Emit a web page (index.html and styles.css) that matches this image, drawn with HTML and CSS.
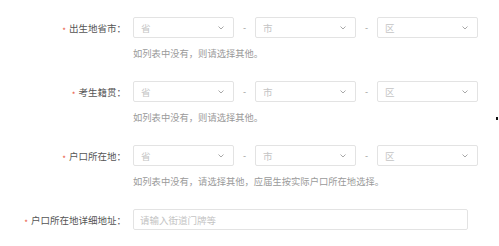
FILE: index.html
```html
<!DOCTYPE html>
<html lang="zh-CN">
<head>
    <meta charset="UTF-8">
    <meta name="viewport" content="width=device-width, initial-scale=1.0">
    <title>考生信息</title>
    <link rel="stylesheet" href="styles.css">
</head>
<body>
    <form class="info-form">
        <div class="field">
            <div class="row">
                <label class="label"><span class="star">*</span>出生地省市：</label>
                <div class="select"><span>省</span><svg viewBox="0 0 6 4"><polyline points="0.5,0.5 3,3 5.5,0.5"/></svg></div>
                <span class="dash">-</span>
                <div class="select"><span>市</span><svg viewBox="0 0 6 4"><polyline points="0.5,0.5 3,3 5.5,0.5"/></svg></div>
                <span class="dash">-</span>
                <div class="select"><span>区</span><svg viewBox="0 0 6 4"><polyline points="0.5,0.5 3,3 5.5,0.5"/></svg></div>
            </div>
            <p class="hint">如列表中没有，则请选择其他。</p>
        </div>

        <div class="field">
            <div class="row">
                <label class="label"><span class="star">*</span>考生籍贯：</label>
                <div class="select"><span>省</span><svg viewBox="0 0 6 4"><polyline points="0.5,0.5 3,3 5.5,0.5"/></svg></div>
                <span class="dash">-</span>
                <div class="select"><span>市</span><svg viewBox="0 0 6 4"><polyline points="0.5,0.5 3,3 5.5,0.5"/></svg></div>
                <span class="dash">-</span>
                <div class="select"><span>区</span><svg viewBox="0 0 6 4"><polyline points="0.5,0.5 3,3 5.5,0.5"/></svg></div>
            </div>
            <p class="hint">如列表中没有，则请选择其他。</p>
        </div>

        <div class="field">
            <div class="row">
                <label class="label"><span class="star">*</span>户口所在地：</label>
                <div class="select"><span>省</span><svg viewBox="0 0 6 4"><polyline points="0.5,0.5 3,3 5.5,0.5"/></svg></div>
                <span class="dash">-</span>
                <div class="select"><span>市</span><svg viewBox="0 0 6 4"><polyline points="0.5,0.5 3,3 5.5,0.5"/></svg></div>
                <span class="dash">-</span>
                <div class="select"><span>区</span><svg viewBox="0 0 6 4"><polyline points="0.5,0.5 3,3 5.5,0.5"/></svg></div>
            </div>
            <p class="hint">如列表中没有，请选择其他，应届生按实际户口所在地选择。</p>
        </div>

        <div class="field">
            <div class="row">
                <label class="label"><span class="star">*</span>户口所在地详细地址：</label>
                <input class="text-input" type="text" placeholder="请输入街道门牌等">
            </div>
        </div>
    </form>
    <div class="dot"></div>
</body>
</html>
```

FILE: styles.css
```css
body {
    margin: 0;
    padding-top: 17px;
    font-family: "Noto Sans CJK SC", "Noto Sans", sans-serif;
    background-color: #ffffff;
    color: #555;
}
.info-form {
    margin: 0;
}
.field {
    margin-bottom: 22px;
}
.row {
    display: flex;
    align-items: center;
    height: 21px;
}
.label {
    width: 126px;
    margin-right: 7px;
    text-align: right;
    font-size: 9.5px;
    color: #555;
    white-space: nowrap;
}
.star {
    color: #e8553b;
    font-size: 8px;
    margin-right: 3px;
    position: relative;
    top: 2px;
}
.select {
    box-sizing: border-box;
    width: 101px;
    height: 21px;
    border: 1px solid #e3e3e3;
    border-radius: 2px;
    display: flex;
    align-items: center;
    justify-content: space-between;
    padding: 0 9px 0 7px;
    font-size: 9.5px;
    color: #c4c4c4;
}
.select svg {
    width: 6px;
    height: 4px;
    fill: none;
    stroke: #a8a8a8;
    stroke-width: 1;
}
.dash {
    width: 21px;
    text-align: center;
    font-size: 9px;
    color: #999;
}
.hint {
    margin: 9px 0 0 133px;
    font-size: 9.3px;
    line-height: 12px;
    color: #9a9a9a;
}
.text-input {
    box-sizing: border-box;
    width: 335px;
    height: 21px;
    border: 1px solid #e3e3e3;
    border-radius: 2px;
    padding: 0 6px;
    font-family: inherit;
    font-size: 9.5px;
    outline: none;
}
.text-input::placeholder {
    color: #c4c4c4;
}
.dot {
    position: absolute;
    left: 496px;
    top: 117px;
    width: 2px;
    height: 3px;
    background-color: #111;
}
```
